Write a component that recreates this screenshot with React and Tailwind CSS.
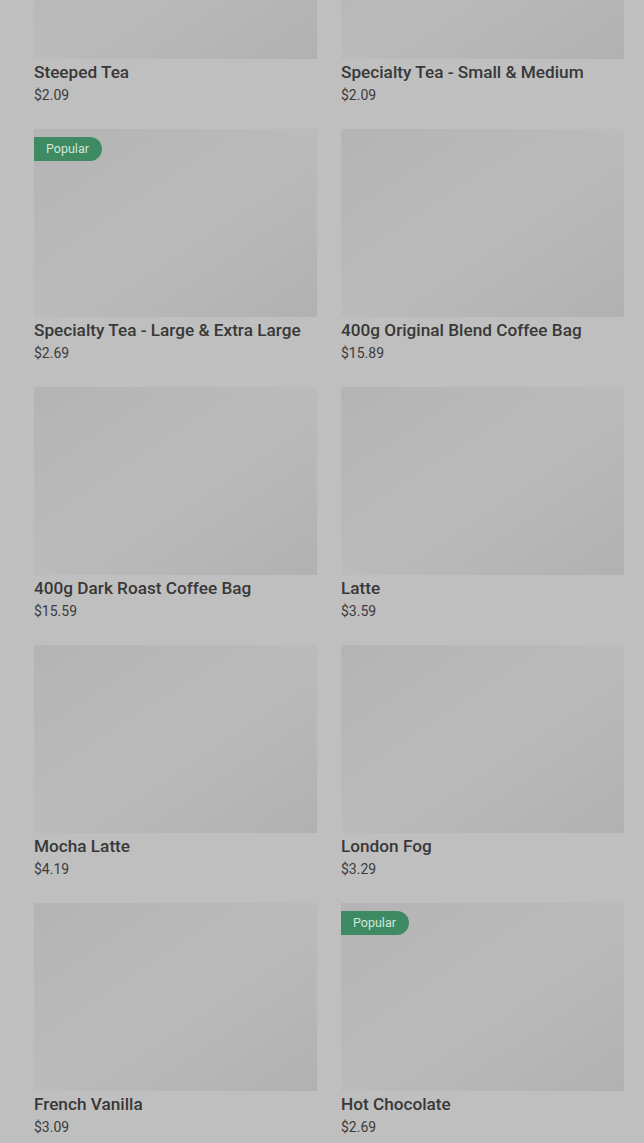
const products = [
  { name: 'Steeped Tea', price: '$2.09' },
  { name: 'Specialty Tea - Small & Medium', price: '$2.09' },
  { name: 'Specialty Tea - Large & Extra Large', price: '$2.69', popular: true },
  { name: '400g Original Blend Coffee Bag', price: '$15.89' },
  { name: '400g Dark Roast Coffee Bag', price: '$15.59' },
  { name: 'Latte', price: '$3.59' },
  { name: 'Mocha Latte', price: '$4.19' },
  { name: 'London Fog', price: '$3.29' },
  { name: 'French Vanilla', price: '$3.09' },
  { name: 'Hot Chocolate', price: '$2.69', popular: true },
]

function ProductCard({ p }) {
  return (
    <div className="flex flex-col">
      <div className="relative h-[188px] bg-linear-to-br from-[#b4b4b4] via-[#bbbbbb] to-[#b1b1b1]">
        {p.popular && (
          <span className="absolute left-0 top-[8px] h-[24px] pl-[12px] pr-[13px] flex items-center rounded-r-full bg-[#3e8a62] text-[12.5px] text-[#d4e6da]">
            Popular
          </span>
        )}
      </div>
      <p className="mt-[1px] text-[17.2px] leading-[24px] font-medium text-[#383838] whitespace-nowrap">{p.name}</p>
      <p className="mt-[1px] text-[14px] leading-[20px] text-[#3c3c3c]">{p.price}</p>
    </div>
  )
}

export default function App() {
  return (
    <div className="h-[1143px] overflow-hidden bg-[#bfbfbf]" style={{ fontFamily: 'Roboto, "Noto Sans", sans-serif' }}>
      <div className="-mt-[129px] pl-[34px] pr-[20px] grid grid-cols-2 gap-x-[24px] gap-y-[24px]">
        {products.map((p) => (
          <ProductCard key={p.name} p={p} />
        ))}
      </div>
    </div>
  )
}
